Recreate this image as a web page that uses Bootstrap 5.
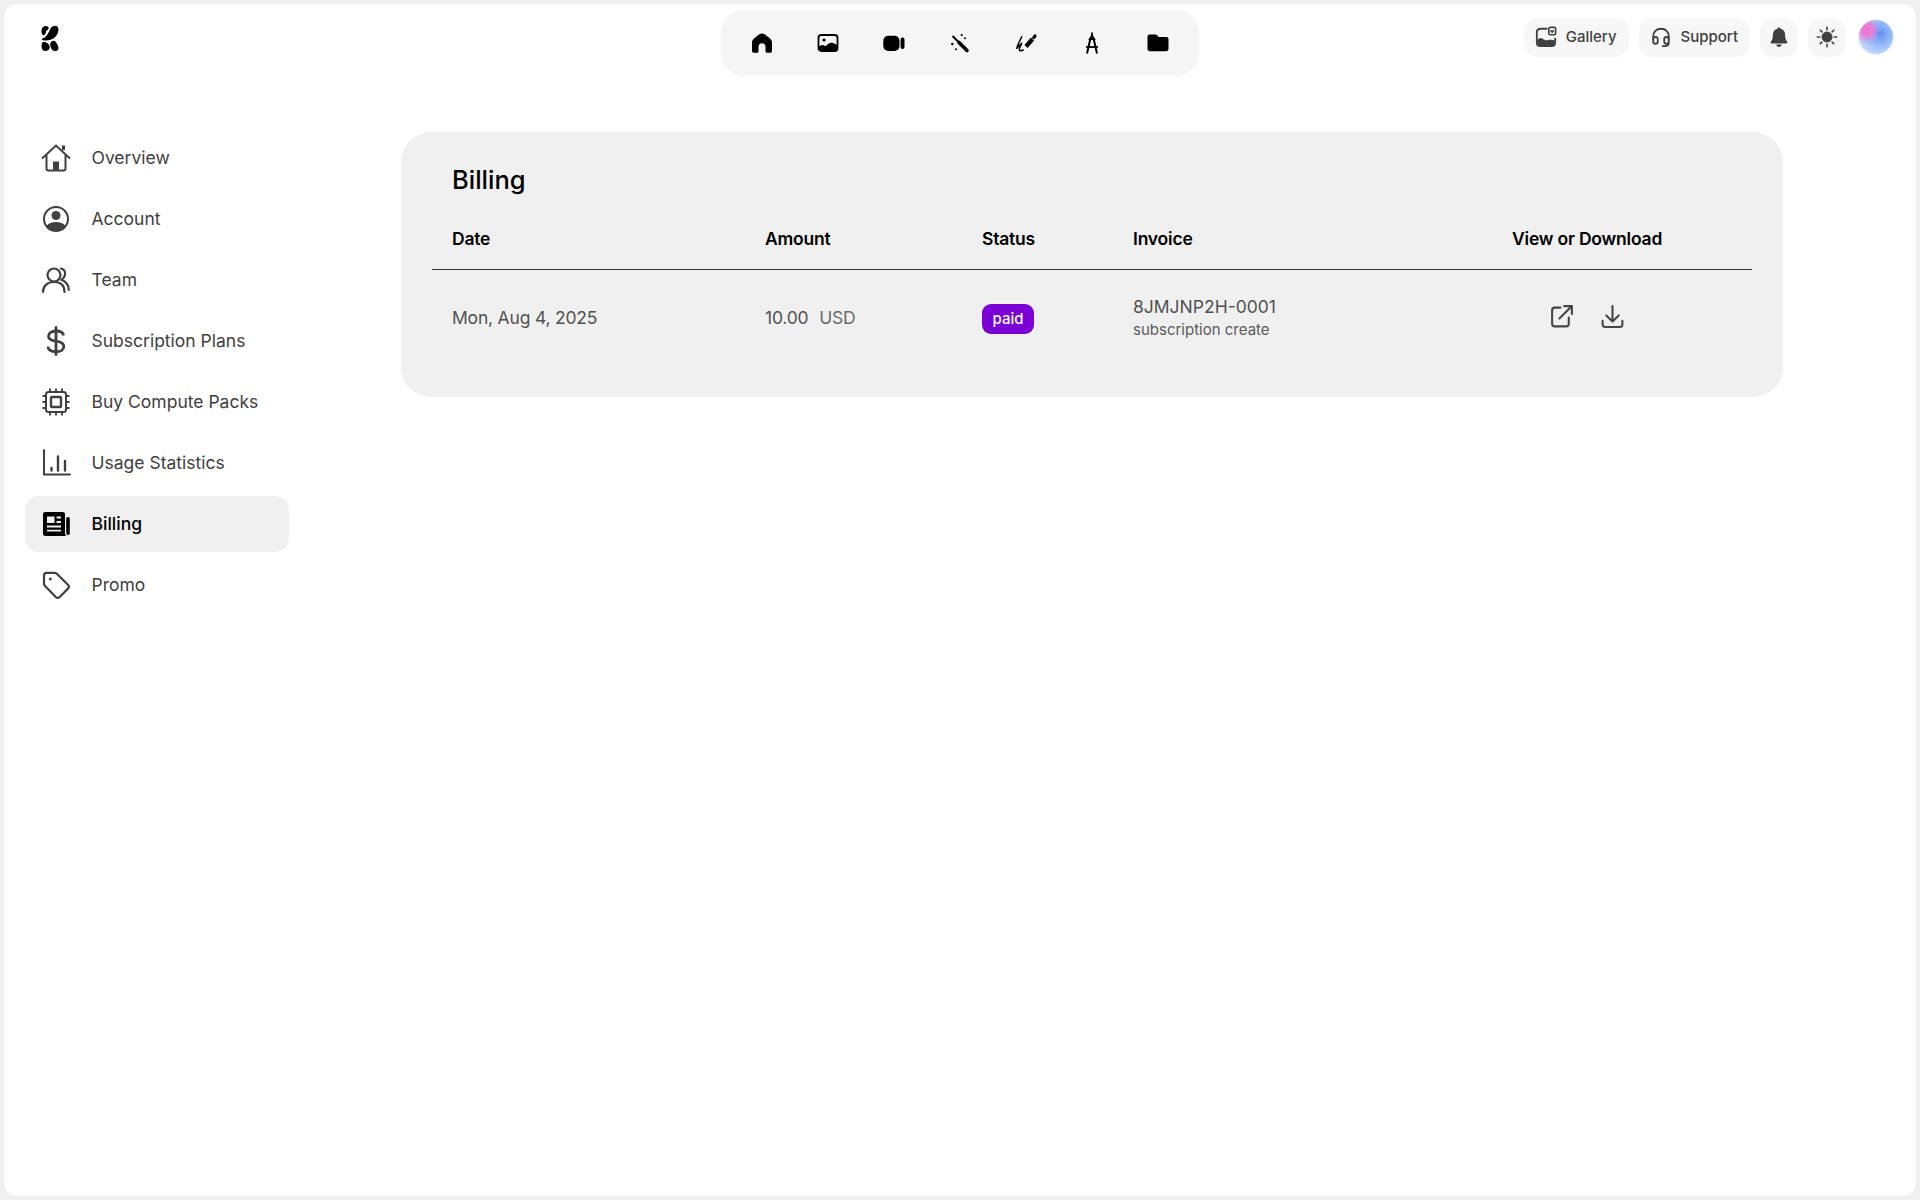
<!DOCTYPE html>
<html lang="en">
<head>
  <meta charset="UTF-8">
  <title>Billing</title>
  <link href="https://cdn.jsdelivr.net/npm/bootstrap@5.3.0/dist/css/bootstrap.min.css" rel="stylesheet">
  <style>
    html, body { height: 100%; }
    body { background: #f0f0f0; padding: 4px; font-family: Inter, "Liberation Sans", sans-serif; color: #404040; }
    .app-frame { background: #fff; border-radius: 14px; height: 1192px; }
    .top-area { height: 126px; position: relative; }
    .brand-logo { position: absolute; left: 37px; top: 21px; width: 18px; height: 26px; }
    .tool-bar { position: absolute; left: 717px; top: 6px; width: 478px; height: 66px; background: #f5f5f5; border-radius: 22px; padding: 0 8px; }
    .tool-bar a { width: 66px; height: 66px; color: #000; }
    .tool-bar svg { width: 24px; height: 24px; }
    .right-tools { position: absolute; right: 24px; top: 13px; height: 40px; gap: 10px; }
    .pill-btn { height: 39px; background: #f7f7f7; border-radius: 14px; color: #404040; font-size: 15px; font-weight: 500; text-decoration: none; padding: 0 12px 0 11px; gap: 9px; }
    .pill-btn svg { width: 22px; height: 22px; }
    .round-btn { width: 38px; height: 39px; padding: 0; justify-content: center; }
    .user-avatar { width: 34px; height: 34px; border-radius: 50%; margin-left: 3px; margin-right: -1px; background: radial-gradient(circle at 62% 40%, #5f8ff5 0%, #86aef8 26%, #b9d2fb 66%, #cfe0fd 100%); position: relative; overflow: hidden; box-shadow: 0 0 0 2px #f5f5f5; }
    .user-avatar::before { content: ""; position: absolute; left: -5px; top: -3px; width: 26px; height: 26px; border-radius: 50%; background: radial-gradient(circle, #ec78d4 25%, rgba(236,120,212,0) 72%); }
    .side-nav { width: 264px; margin-left: 21px; gap: 5px; }
    .side-link { height: 56px; border-radius: 14px; color: #404040; font-size: 17.5px; text-decoration: none; padding-left: 16px; gap: 20.5px; }
    .side-link svg { width: 30px; height: 30px; flex-shrink: 0; }
    .side-link.is-current { background: #f0f0f0; color: #000; font-weight: 500; }
    .billing-card { width: 1382px; height: 265px; margin-top: 2px; margin-left: 112px; background: #f0f0f0; border-radius: 30px; padding: 0 31px; }
    .billing-title { font-size: 25.5px; font-weight: 500; color: #000; line-height: 32px; padding: 32px 0 0 20px; margin: 0; }
    .billing-table { --bs-table-bg: transparent; table-layout: fixed; width: 100%; margin: 0; }
    .billing-table th { font-size: 17.5px; font-weight: 600; letter-spacing: -.2px; color: #000; height: 73px; padding: 13px 0 0 20px; border-bottom: 1.5px solid #333; vertical-align: middle; }
    .billing-table td { font-size: 17.5px; letter-spacing: -.2px; color: #505050; border: 0; padding: 0 0 0 20px; height: 98px; vertical-align: middle; }
    .usd-label { color: #6a6a6a; margin-left: 6px; }
    .paid-tag { background: #7a00d6; color: #fff; font-size: 15px; font-weight: 500; letter-spacing: 0; border-radius: 9px; width: 52px; height: 30px; margin-top: 2px; }
    .invoice-no { letter-spacing: 0; line-height: 23px; margin-top: 1px; }
    .invoice-sub { font-size: 15px; letter-spacing: 0; line-height: 24px; color: #5a5a5a; }
    .doc-links { gap: 26px; padding-left: 37px; margin-top: -4px; }
    .doc-links svg { width: 25px; height: 25px; color: #454545; }
  </style>
</head>
<body>

<div class="app-frame">
  <!-- Barra superiore -->
  <div class="top-area">
    <svg class="brand-logo" viewBox="125 75 50 77" fill="#000">
      <path d="M137 78c6 0 10 3 9 7-1 3-5 5-7 8-2 4-2 11-6 12-5 1-8-4-8-11 0-9 4-16 12-16z"/>
      <path d="M152 84c5-9 23-11 23 4 0 21-21 36-46 32-4-1-5-4-1-5 10-2 19-18 24-31z"/>
      <path d="M131 125c9 0 17 5 18 14 1 8-4 13-12 13-8 0-12-5-12-14 0-7 1-13 6-13z"/>
      <path d="M153 125c5-4 11-5 14 0 5 6 9 15 8 20-1 5-5 7-10 7-6 0-11-4-13-11-2-6-2-13 1-16z"/>
    </svg>

    <div class="tool-bar d-flex align-items-center">
      <a href="#" class="d-flex align-items-center justify-content-center">
        <svg viewBox="0 0 24 24" fill="currentColor"><path d="M12 2.500c-1 0-2 .4-3 1.100L4.200 7.200C2.800 8.300 2 9.700 2 11.500v8c0 1.400.9 2.300 2.200 2.300H7c.9 0 1.500-.6 1.500-1.500v-4.600c0-2 1.400-3.400 3.500-3.400s3.500 1.400 3.500 3.400v4.600c0 .9.600 1.500 1.500 1.500h2.800c1.300 0 2.200-.9 2.200-2.300v-8c0-1.800-.8-3.200-2.200-4.300L15 3.600c-1-.7-2-1.100-3-1.100z"/></svg>
      </a>
      <a href="#" class="d-flex align-items-center justify-content-center">
        <svg viewBox="0 0 24 24"><rect x="2.500" y="4" width="19" height="16" rx="2.800" fill="none" stroke="currentColor" stroke-width="1.800"/><circle cx="8" cy="9" r="1.600" fill="currentColor"/><path d="M3 18v-2.500c1.500-1.500 3-2 4.500-1.200 1.300.7 2.300.8 3.500-.3 1.500-1.500 3-2.500 4.800-2.200 2 .3 3.500 1.200 5.200 2.500V18c0 1.300-.7 2-2 2H5c-1.300 0-2-.7-2-2z" fill="currentColor"/></svg>
      </a>
      <a href="#" class="d-flex align-items-center justify-content-center">
        <svg viewBox="0 0 24 24" fill="currentColor"><rect x="1.300" y="4.800" width="16.200" height="15.200" rx="5"/><rect x="18.600" y="6.500" width="3.900" height="11.500" rx="1.900"/></svg>
      </a>
      <a href="#" class="d-flex align-items-center justify-content-center">
        <svg viewBox="0 0 24 24" fill="currentColor"><path d="M11 11.500 19 19.500" stroke="currentColor" stroke-width="3.600" stroke-linecap="round"/><path d="M4.500 5 10 10.500" stroke="currentColor" stroke-width="2"/><circle cx="13.700" cy="4" r="1.100"/><circle cx="17" cy="7.300" r="1"/><circle cx="4.300" cy="13" r="1.200"/><circle cx="8" cy="18.300" r="1"/></svg>
      </a>
      <a href="#" class="d-flex align-items-center justify-content-center">
        <svg viewBox="0 0 24 24" fill="none" stroke="currentColor"><path d="M12 15.500 18.500 8" stroke-width="4.200"/><path d="M19.800 6.500 21 5" stroke-width="3.200" stroke-linecap="round"/><path d="M7.700 5.700C6 9.500 3.500 14 2.800 17.300M2.800 17.300c1.500-1.700 3.500-4 4.900-5-.8 2-2.400 4.500-2.400 6.500 0 1.300 1 1.300 4 .2" stroke-width="1.500" stroke-linecap="round" stroke-linejoin="round"/></svg>
      </a>
      <a href="#" class="d-flex align-items-center justify-content-center">
        <svg viewBox="0 0 24 24" fill="none" stroke="currentColor" stroke-width="1.800"><path d="M12 1.500v3"/><path d="M12 4.500 9.800 8h4.400z"/><path d="M10.300 8 7 22.500M13.700 8 17 22.500" stroke-width="2"/><path d="M6 16h12"/></svg>
      </a>
      <a href="#" class="d-flex align-items-center justify-content-center">
        <svg viewBox="0 0 24 24" fill="currentColor"><path d="M3.800 3.500h5.700c.8 0 1.300.3 1.800.9l1.300 1.600h7.600c1.500 0 2.300.9 2.300 2.300v9.500c0 1.500-.9 2.400-2.300 2.400H3.800c-1.400 0-2.300-.9-2.300-2.400V5.800c0-1.400.9-2.300 2.300-2.300z"/></svg>
      </a>
    </div>

    <div class="right-tools d-flex align-items-center">
      <a href="#" class="pill-btn d-flex align-items-center">
        <svg viewBox="0 0 24 24"><path d="M13.500 3H6C3.500 3 2 4.500 2 7v11c0 2.500 1.500 4 4 4h12c2.500 0 4-1.500 4-4v-5" fill="none" stroke="currentColor" stroke-width="2"/><path d="M2.500 15.500c2-2.500 4-3 6-1.500 2 1.500 3.500 2 6 1.300 2.500-.6 5-.6 7 .2V18c0 2.500-1.500 4-4 4H6c-2 0-3.500-1.500-3.500-3.500z" fill="currentColor"/><rect x="15" y="1.500" width="7.500" height="8" rx="1.600" fill="none" stroke="currentColor" stroke-width="1.800"/><path d="M18.700 7.800 16.800 6c-1-1.200.8-2.500 1.900-1.100 1.100-1.400 2.900-.1 1.900 1.100z" fill="currentColor"/></svg>
        Gallery
      </a>
      <a href="#" class="pill-btn d-flex align-items-center">
        <svg viewBox="0 0 24 24" fill="none" stroke="currentColor" stroke-width="2"><path d="M3.500 15v-3.500C3.500 6.500 7 3 12 3s8.500 3.500 8.500 8.500V15"/><rect x="3.500" y="12" width="5" height="7.500" rx="2.500"/><rect x="15.500" y="12" width="5" height="7.500" rx="2.500"/><path d="M20.500 18c0 2.500-2 4-4.500 4h-3"/></svg>
        Support
      </a>
      <a href="#" class="pill-btn round-btn d-flex align-items-center">
        <svg viewBox="0 0 24 24" fill="currentColor"><path d="M12 1.500c1 0 1.600.7 1.700 1.600 3.300.8 5 3.500 5 6.900 0 3.500.7 5.300 2.100 6.800.8 1 .2 2.200-1 2.200H4.200c-1.200 0-1.800-1.200-1-2.200C4.600 15.300 5.300 13.500 5.300 10c0-3.400 1.700-6.100 5-6.900.1-.9.700-1.600 1.700-1.600z"/><path d="M9 20.200h6c-.3 1.500-1.500 2.600-3 2.600s-2.700-1.100-3-2.600z"/></svg>
      </a>
      <a href="#" class="pill-btn round-btn d-flex align-items-center">
        <svg viewBox="0 0 24 24" fill="currentColor" stroke="currentColor"><circle cx="12" cy="12" r="5.500"/><path d="M12 1.500v2.500M12 20v2.500M1.500 12H4M20 12h2.500M4.600 4.600l1.800 1.800M17.600 17.600l1.800 1.800M4.600 19.400l1.800-1.800M17.600 6.400l1.800-1.800" stroke-width="1.800" stroke-linecap="round"/></svg>
      </a>
      <div class="user-avatar"></div>
    </div>
  </div>

  <div class="d-flex align-items-start">
    <!-- Menu laterale -->
    <nav class="side-nav d-flex flex-column">
      <a href="#" class="side-link d-flex align-items-center">
        <svg viewBox="0 0 30 30" fill="none" stroke="currentColor" stroke-width="2"><path d="M1 15.500 15 2.500l14 13"/><path d="M5.500 12v13.500c0 1.200.7 1.900 1.900 1.900h15.200c1.200 0 1.900-.7 1.900-1.900V12"/><path d="M22.500 7V2.500" stroke-width="3"/><rect x="12" y="18.500" width="6" height="8.500" fill="currentColor" stroke="none"/></svg>
        Overview
      </a>
      <a href="#" class="side-link d-flex align-items-center">
        <svg viewBox="0 0 30 30"><circle cx="15" cy="15" r="12" fill="none" stroke="currentColor" stroke-width="2"/><circle cx="15" cy="11.500" r="4.500" fill="currentColor"/><path d="M5.500 22c2-3 5.500-4 9.500-4s7.500 1 9.500 4c-2 3.200-5.500 5-9.500 5s-7.500-1.800-9.500-5z" fill="currentColor"/></svg>
        Account
      </a>
      <a href="#" class="side-link d-flex align-items-center">
        <svg viewBox="0 0 30 30" fill="none" stroke="currentColor" stroke-width="2.200" stroke-linecap="round"><circle cx="13" cy="10" r="6.500"/><path d="M2 27c0-6.500 4.500-10 11-10s10.500 3.500 10.500 10"/><path d="M20 3.500c3 .8 4.500 3.300 4 6.300-.3 2-1.500 3.700-3.500 5 4 1.500 7 4.700 7.300 10"/></svg>
        Team
      </a>
      <a href="#" class="side-link d-flex align-items-center">
        <svg viewBox="0 0 30 30" fill="none" stroke="currentColor" stroke-width="2.800"><path d="M22.500 9.500c-.3-2.800-3.300-4.500-7.500-4.500-4.500 0-7.500 2-7.500 5.200 0 3 2.500 4.200 7.500 5 5 .7 7.800 2 7.800 5.200 0 3.300-3.200 5.300-7.800 5.300-4.500 0-7.700-1.900-8-5.100"/><path d="M15 1.500v27" stroke-linecap="round"/></svg>
        Subscription Plans
      </a>
      <a href="#" class="side-link d-flex align-items-center">
        <svg viewBox="0 0 30 30" fill="none" stroke="currentColor" stroke-width="2"><rect x="5" y="5" width="20" height="20" rx="2.500"/><rect x="10" y="10" width="10" height="10" rx="1" stroke-width="2.400"/><path d="M9 1.500V5M15 1.500V5M21 1.500V5M9 25v3.500M15 25v3.500M21 25v3.500M1.500 9H5M1.500 15H5M1.500 21H5M25 9h3.500M25 15h3.500M25 21h3.500" stroke-width="1.800"/></svg>
        Buy Compute Packs
      </a>
      <a href="#" class="side-link d-flex align-items-center">
        <svg viewBox="0 0 30 30" fill="none" stroke="currentColor" stroke-width="2"><path d="M3 2v24.500h26" stroke-linecap="round"/><path d="M10.500 20v2.500M17 8.500v14M24 13v9.500" stroke-width="2.400" stroke-linecap="round"/></svg>
        Usage Statistics
      </a>
      <a href="#" class="side-link is-current d-flex align-items-center">
        <svg viewBox="0 0 30 30"><path d="M4.500 3h17c1.700 0 2.500.8 2.500 2.500v19c0 1.200.5 2 1.500 2.500H4.500C2.800 27 2 26.200 2 24.500v-19C2 3.800 2.800 3 4.500 3z" fill="#000"/><rect x="25.200" y="8" width="3.600" height="18" rx="1.800" fill="#000"/><rect x="6" y="7.500" width="7.500" height="6.500" fill="#f0f0f0"/><path d="M15.500 8.500H20M15.500 13H20M6 17.500h14M6 21.700h14" stroke="#f0f0f0" stroke-width="1.800"/></svg>
        Billing
      </a>
      <a href="#" class="side-link d-flex align-items-center">
        <svg viewBox="0 0 30 30" fill="none" stroke="currentColor" stroke-width="2.200" stroke-linejoin="round"><path d="M3 5.500C3 3.800 3.800 2.800 5.500 2.800h7.800c1 0 1.800.3 2.500 1L27.200 15c1 1 1 2.400 0 3.400l-8.800 8.800c-1 1-2.400 1-3.400 0L3.800 15.800c-.6-.7-.8-1.400-.8-2.300z"/><circle cx="9.300" cy="9" r="1.500" fill="currentColor" stroke="none"/></svg>
        Promo
      </a>
    </nav>

    <!-- Fatture -->
    <div class="billing-card">
      <h1 class="billing-title">Billing</h1>
      <table class="table billing-table">
        <colgroup>
          <col style="width: 313px">
          <col style="width: 217px">
          <col style="width: 151px">
          <col style="width: 379px">
          <col style="width: 260px">
        </colgroup>
        <thead>
          <tr>
            <th>Date</th>
            <th>Amount</th>
            <th>Status</th>
            <th>Invoice</th>
            <th>View or Download</th>
          </tr>
        </thead>
        <tbody>
          <tr>
            <td>Mon, Aug 4, 2025</td>
            <td>10.00 <span class="usd-label">USD</span></td>
            <td><span class="paid-tag d-inline-flex align-items-center justify-content-center">paid</span></td>
            <td>
              <div class="invoice-no">8JMJNP2H-0001</div>
              <div class="invoice-sub">subscription create</div>
            </td>
            <td>
              <div class="doc-links d-flex">
                <svg viewBox="0 0 24 24" fill="none" stroke="currentColor" stroke-width="2" stroke-linecap="round" stroke-linejoin="round"><path d="M11 3.500H5.500c-1.500 0-2.500 1-2.500 2.500v13c0 1.500 1 2.500 2.500 2.500h11c1.500 0 2.500-1 2.500-2.500v-6"/><path d="M10 14 21.500 2.500M14.500 2h7.500v7.500"/></svg>
                <svg viewBox="0 0 24 24" fill="none" stroke="currentColor" stroke-width="2" stroke-linecap="round" stroke-linejoin="round"><path d="M12 2v14.500M6 11l6 5.800 6-5.800"/><path d="M2.500 16v3.500c0 1.500 1 2.500 2.500 2.500h14c1.500 0 2.500-1 2.500-2.500V16"/></svg>
              </div>
            </td>
          </tr>
        </tbody>
      </table>
    </div>
  </div>
</div>

<script src="https://cdn.jsdelivr.net/npm/bootstrap@5.3.0/dist/js/bootstrap.bundle.min.js"></script>
</body>
</html>
